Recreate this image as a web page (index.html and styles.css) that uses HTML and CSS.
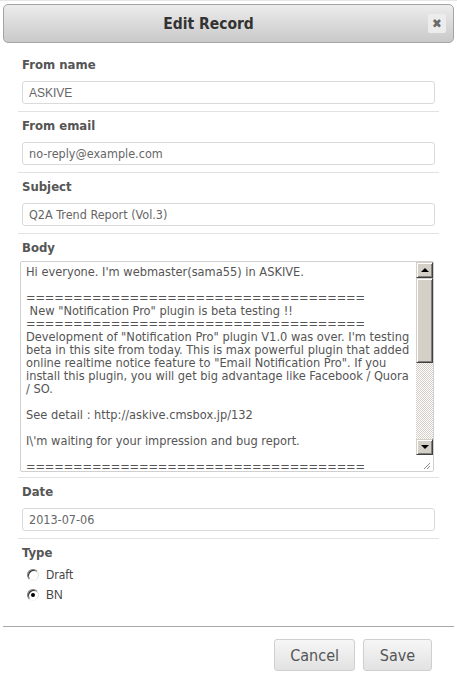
FILE: index.html
```html
<!DOCTYPE html>
<html lang="en">
<head>
  <meta charset="UTF-8" />
  <title>Edit Record</title>
  <link rel="stylesheet" href="styles.css">
</head>
<body>
  <div class="dialog">
    <div class="titlebar">
      <h1>Edit Record</h1>
      <span class="close">&#10006;</span>
    </div>

    <form class="form">
      <div class="field">
        <label>From name</label>
        <input type="text" class="arial" value="ASKIVE">
      </div>
      <div class="field">
        <label>From email</label>
        <input type="text" value="no-reply@example.com">
      </div>
      <div class="field">
        <label>Subject</label>
        <input type="text" value="Q2A Trend Report (Vol.3)">
      </div>
      <div class="field body-field">
        <label>Body</label>
        <div class="textarea">
          <div class="ta-text">Hi everyone. I'm webmaster(sama55) in ASKIVE.

<span class="eq">====================================</span>
 New "Notification Pro" plugin is beta testing !!
<span class="eq">====================================</span>
Development of "Notification Pro" plugin V1.0 was over. I'm testing
beta in this site from today. This is max powerful plugin that added
online realtime notice feature to "Email Notification Pro". If you
install this plugin, you will get big advantage like Facebook / Quora
/ SO.

See detail : http://askive.cmsbox.jp/132

I\'m waiting for your impression and bug report.

<span class="eq">====================================</span></div>
          <div class="scrollbar">
            <div class="sb-btn"><span class="arrow up"></span></div>
            <div class="sb-thumb"></div>
            <div class="sb-track"></div>
            <div class="sb-btn"><span class="arrow down"></span></div>
            <div class="sb-corner">
              <svg width="16" height="16" viewBox="0 0 16 16">
                <line x1="14" y1="8" x2="8" y2="14" stroke="#888" stroke-width="1"/>
                <line x1="14" y1="11" x2="11" y2="14" stroke="#888" stroke-width="1"/>
              </svg>
            </div>
          </div>
        </div>
      </div>
      <div class="field">
        <label>Date</label>
        <input type="text" value="2013-07-06">
      </div>
      <div class="field type-field">
        <label>Type</label>
        <div class="radio"><span class="radio-dot"></span><span>Draft</span></div>
        <div class="radio"><span class="radio-dot checked"></span><span class="arial">BN</span></div>
      </div>
    </form>

    <div class="actions">
      <button type="button" class="btn">Cancel</button>
      <button type="button" class="btn">Save</button>
    </div>
  </div>
</body>
</html>
```

FILE: styles.css
```css
body {
  margin: 0;
  padding: 0;
  background: #fff;
  font-family: "DejaVu Sans Condensed", "DejaVu Sans", sans-serif;
  color: #555;
}

.dialog {
  border-top: 1px solid #e6e6e6;
  padding-top: 3px;
}

.titlebar {
  display: flex;
  align-items: center;
  height: 37px;
  margin: 0 3px;
  border: 1px solid #a4a4a4;
  border-radius: 5px;
  background: linear-gradient(#ececec, #c9c9c9);
}

.titlebar h1 {
  flex: 1;
  margin: 0;
  padding-right: 15px;
  text-align: center;
  font-size: 15.5px;
  font-weight: bold;
  color: #333;
}

.close {
  display: flex;
  align-items: center;
  justify-content: center;
  width: 18px;
  height: 19px;
  margin-right: 7px;
  border-radius: 2px;
  background: #ececec;
  color: #6a6a6a;
  font-size: 13px;
}

.form {
  padding: 8px 18px 0;
}

.field {
  padding: 6px 4px 7px;
  border-bottom: 1px solid #e2e2e2;
}

.field label {
  display: block;
  font-size: 13px;
  line-height: 16px;
  font-weight: bold;
  color: #555;
  margin-bottom: 8px;
}

.field input {
  display: block;
  box-sizing: border-box;
  width: 100%;
  height: 23px;
  margin: 0;
  padding: 0 6px;
  border: 1px solid #dadada;
  border-radius: 3px;
  font-family: "DejaVu Sans Condensed", "DejaVu Sans", sans-serif;
  font-size: 12.5px;
  color: #666;
  outline: none;
}

.field input.arial,
.arial {
  font-family: "Liberation Sans", Arial, sans-serif;
}

.field input.arial {
  font-size: 12px;
}

.body-field {
  padding-bottom: 5px;
}

.body-field label {
  margin-bottom: 5px;
}

.textarea {
  display: flex;
  height: 211px;
  box-sizing: border-box;
  margin: 0 1px 0 -2px;
  border: 1px solid #d0d0d0;
  border-radius: 2px;
  overflow: hidden;
}

.ta-text {
  flex: 1;
  padding: 3px 5px 0;
  white-space: pre;
  overflow: hidden;
  font-size: 12.7px;
  line-height: 13px;
  color: #555;
}

.eq {
  letter-spacing: -0.15px;
}

.scrollbar {
  display: flex;
  flex-direction: column;
  width: 17px;
}

.sb-btn,
.sb-thumb {
  box-sizing: border-box;
  background: #d4d0c8;
  border: 1px solid;
  border-color: #d4d0c8 #404040 #404040 #d4d0c8;
  box-shadow: inset 1px 1px #fff, inset -1px -1px #808080;
}

.sb-btn {
  height: 16px;
  display: flex;
  align-items: center;
  justify-content: center;
}

.sb-thumb {
  height: 85px;
}

.sb-track {
  flex: 1;
  background: repeating-conic-gradient(#d4d0c8 0 25%, #fff 0 50%) 0 0 / 2px 2px;
}

.sb-corner {
  height: 16px;
  background: #fff;
}

.sb-corner svg {
  display: block;
}

.arrow {
  width: 0;
  height: 0;
  border-left: 4px solid transparent;
  border-right: 4px solid transparent;
}

.arrow.up {
  border-bottom: 4px solid #000;
}

.arrow.down {
  border-top: 4px solid #000;
}

.type-field {
  border-bottom: none;
  padding-bottom: 21px;
}

.type-field label {
  margin-bottom: 4px;
}

.radio {
  display: flex;
  align-items: center;
  height: 20px;
  padding-left: 5px;
  font-size: 12px;
  color: #444;
}

.radio-dot {
  position: relative;
  box-sizing: border-box;
  width: 12px;
  height: 12px;
  margin-right: 7px;
  border-radius: 50%;
  border: 1px solid;
  border-color: #7a7a7a #e0e0e0 #f4f4f4 #7a7a7a;
  box-shadow: inset 1px 1px #303030;
  background: #fff;
}

.radio-dot.checked::after {
  content: "";
  position: absolute;
  left: 3px;
  top: 3px;
  width: 4px;
  height: 4px;
  border-radius: 50%;
  background: #000;
}

.actions {
  display: flex;
  justify-content: flex-end;
  gap: 8px;
  margin: 0 3px;
  padding: 12px 22px 0 0;
  border-top: 1px solid #a8a8a8;
}

.btn {
  height: 32px;
  min-width: 69px;
  padding: 0 15px;
  border: 1px solid #cfcfcf;
  border-radius: 3px;
  background: linear-gradient(#f6f6f6, #e2e2e2);
  font-family: "DejaVu Sans Condensed", "DejaVu Sans", sans-serif;
  font-size: 16px;
  color: #555;
}
```
